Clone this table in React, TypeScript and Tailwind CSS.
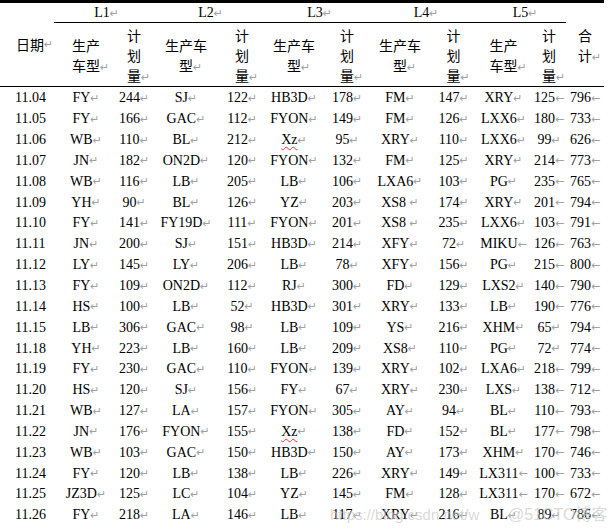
import React from "react";

type Row = [string, string, number, string, number, string, number, string, number, string, number, number];

const rows: Row[] = [
  ["11.04", "FY", 244, "SJ", 122, "HB3D", 178, "FM", 147, "XRY", 125, 796],
  ["11.05", "FY", 166, "GAC", 112, "FYON", 149, "FM", 126, "LXX6", 180, 733],
  ["11.06", "WB", 110, "BL", 212, "Xz", 95, "XRY", 110, "LXX6", 99, 626],
  ["11.07", "JN", 182, "ON2D", 120, "FYON", 132, "FM", 125, "XRY", 214, 773],
  ["11.08", "WB", 116, "LB", 205, "LB", 106, "LXA6", 103, "PG", 235, 765],
  ["11.09", "YH", 90, "BL", 126, "YZ", 203, "XS8 ", 174, "XRY", 201, 794],
  ["11.10", "FY", 141, "FY19D", 111, "FYON", 201, "XS8 ", 235, "LXX6", 103, 791],
  ["11.11", "JN", 200, "SJ", 151, "HB3D", 214, "XFY", 72, "MIKU", 126, 763],
  ["11.12", "LY", 145, "LY", 206, "LB", 78, "XFY", 156, "PG", 215, 800],
  ["11.13", "FY", 109, "ON2D", 112, "RJ", 300, "FD", 129, "LXS2", 140, 790],
  ["11.14", "HS", 100, "LB", 52, "HB3D", 301, "XRY", 133, "LB", 190, 776],
  ["11.15", "LB", 306, "GAC", 98, "LB", 109, "YS", 216, "XHM", 65, 794],
  ["11.18", "YH", 223, "LB", 160, "LB", 209, "XS8", 110, "PG", 72, 774],
  ["11.19", "FY", 230, "GAC", 110, "FYON", 139, "XRY", 102, "LXA6", 218, 799],
  ["11.20", "HS", 120, "SJ", 156, "FY", 67, "XRY", 230, "LXS", 138, 712],
  ["11.21", "WB", 127, "LA", 157, "FYON", 305, "AY", 94, "BL", 110, 793],
  ["11.22", "JN", 176, "FYON", 155, "Xz", 138, "FD", 152, "BL", 177, 798],
  ["11.23", "WB", 103, "GAC", 150, "HB3D", 150, "AY", 173, "XHM", 170, 746],
  ["11.24", "FY", 120, "LB", 138, "LB", 226, "XRY", 149, "LX311", 100, 733],
  ["11.25", "JZ3D", 125, "LC", 104, "YZ", 145, "FM", 128, "LX311", 170, 672],
  ["11.26", "FY", 218, "LA", 146, "LB", 117, "XRY", 216, "BL", 89, 786],
];

const COLS =
  "grid grid-cols-[54px_64px_32px_72px_40px_64px_42px_64px_43px_57px_34px_38px]";

const serif = "font-['Liberation_Serif','Noto_Sans_CJK_SC',serif]";

function Mark({ arrow = false }: { arrow?: boolean }) {
  return (
    <span className="font-['DejaVu_Sans',sans-serif] text-[11px] text-[#a0a0a0] leading-none">
      {arrow ? "←" : "↵"}
    </span>
  );
}

function ZMark() {
  return (
    <span className="inline-block w-0 overflow-visible whitespace-nowrap font-['DejaVu_Sans',sans-serif] text-[11px] text-[#a0a0a0] leading-none">
      ↵
    </span>
  );
}

function Cell({ text, arrow = false, wavy = false }: { text: string | number; arrow?: boolean; wavy?: boolean }) {
  return (
    <div className="flex items-center justify-center whitespace-pre">
      {wavy ? (
        <span className="underline decoration-wavy decoration-red-500 decoration-1 underline-offset-2">{text}</span>
      ) : (
        <span>{text}</span>
      )}
      <Mark arrow={arrow} />
    </div>
  );
}

const cjk = "font-['Noto_Sans_CJK_SC',sans-serif] text-[14px]";

export default function App() {
  return (
    <div className={`relative w-[616px] h-[532px] bg-white text-black overflow-hidden ${serif} text-[14px]`}>
      <div className="w-[604px]">
        <div className="border-t-[3px] border-b border-black">
          <div className={`${COLS} grid-rows-[20px_63px]`}>
            <div className={`row-span-2 flex items-center pl-[16px] ${cjk}`}>
              日期<ZMark />
            </div>
            {["L1", "L2", "L3", "L4", "L5"].map((l) => (
              <div key={l} className="col-span-2 flex items-center justify-center border-b border-black leading-none">
                <span>{l}<ZMark /></span>
              </div>
            ))}
            <div className={`row-span-2 flex flex-col items-center justify-center leading-[20px] ${cjk}`}>
              <span>合</span>
              <span>计<ZMark /></span>
            </div>
            {[0, 1, 2, 3, 4].map((i) => (
              <React.Fragment key={i}>
                <div className={`flex flex-col items-center justify-center leading-[20px] ${cjk}`}>
                  {i === 0 || i === 4 ? (
                    <>
                      <span>生产</span>
                      <span>车型<ZMark /></span>
                    </>
                  ) : (
                    <>
                      <span>生产车</span>
                      <span>型<ZMark /></span>
                    </>
                  )}
                </div>
                <div className={`flex flex-col items-center justify-center leading-[20px] ${cjk}`}>
                  <span>计</span>
                  <span>划</span>
                  <span>量<ZMark /></span>
                </div>
              </React.Fragment>
            ))}
          </div>
        </div>
        <div className="pt-[1px]">
          {rows.map((r) => (
            <div key={r[0]} className={`${COLS} h-[20.85px] items-center leading-none`}>
              <div className="pl-[15px]">{r[0]}</div>
              <Cell text={r[1]} />
              <Cell text={r[2]} />
              <Cell text={r[3]} />
              <Cell text={r[4]} />
              <Cell text={r[5]} wavy={r[5] === "Xz"} />
              <Cell text={r[6]} />
              <Cell text={r[7]} />
              <Cell text={r[8]} />
              <Cell text={r[9]} arrow={r[9] === "MIKU" || r[9] === "LX311"} />
              <Cell text={r[10]} arrow={r[10] >= 100} />
              <Cell text={r[11]} arrow />
            </div>
          ))}
        </div>
      </div>
      <div className="absolute left-[330px] top-[504px] whitespace-nowrap font-['Liberation_Sans',sans-serif] text-[15px] text-[#c8c8c8]/70">
        https://blog.csdn.net/w
      </div>
      <div className="absolute left-[508px] top-[503px] whitespace-nowrap font-['Liberation_Sans','Noto_Sans_CJK_SC',sans-serif] text-[16px] text-[#c8c8c8]/70">
        @51CTO博客
      </div>
    </div>
  );
}
